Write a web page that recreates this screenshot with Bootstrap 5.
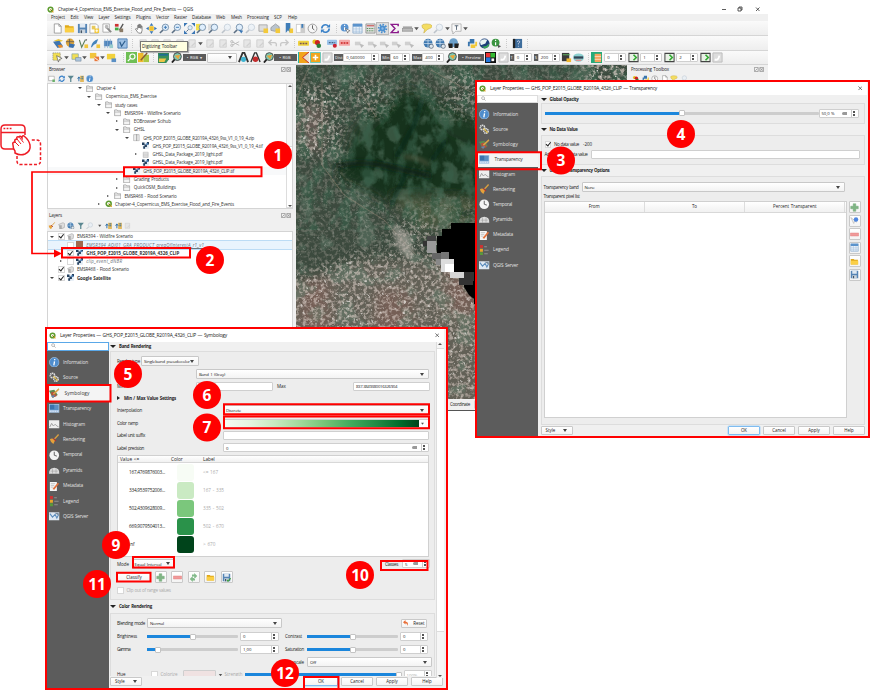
<!DOCTYPE html>
<html lang="en">
<head>
<meta charset="utf-8">
<title>QGIS layer properties walkthrough</title>
<link rel="stylesheet" href="https://cdn.jsdelivr.net/npm/bootstrap@5.3.0/dist/css/bootstrap.min.css">
<style>
*{letter-spacing:inherit}
body{margin:0;width:871px;height:693px;overflow:hidden;position:relative;background:#fff;font:4.5px/1 "Open Sans","Noto Sans",sans-serif;color:#222;word-spacing:.5px}
svg{display:block;flex:none}
span{white-space:nowrap;flex:none}
.win{position:absolute;overflow:hidden;background:#f0f0f0}
.main-win{left:47px;top:14px;width:721px;height:397px;border-bottom:1px solid #555}
.app-title{position:absolute;left:47px;top:4px;width:721px;height:10px;padding:0 7px 0 0}
.menus{height:7px}
.tools{height:15px;background:linear-gradient(#fafafa,#eee);border-bottom:1px solid #d5d5d5}
.tools svg{width:11px;height:11px}
.r3{height:14px}
.sp{flex:none;height:1px}
.tsep{width:1px;height:9px;border-left:1px dotted #ccc;flex:none}
.dk{background:#5b5b5b;color:#ddd;height:7px;font-size:4px;font-weight:600;justify-content:center}
.inp{background:#fff;border:1px solid #cfcfcf;border-radius:1px;height:9px;padding:0 2px;display:flex;align-items:center;flex:none;font-size:4.3px}
.sel{background:linear-gradient(#fff,#f3f3f3);justify-content:space-between;height:10px;border-color:#c8c8c8}
.sel::after{content:"";border:2px solid transparent;border-top:3px solid #444;border-bottom:0;margin-right:2px}
.spin{justify-content:space-between}
.spin i{margin-left:auto;height:7px;width:5px;border-left:1px solid #ccc;background:conic-gradient(from 150deg at 50% 10%,#555 60deg,#0000 0) 50% 0/4px 3px no-repeat,conic-gradient(from -30deg at 50% 90%,#555 60deg,#0000 0) 50% 100%/4px 3px no-repeat}
.spin .clr::after{content:"";display:block;width:5px;height:3px;background:#999;border-radius:2px 0 0 2px}
.clr{margin-left:auto;padding-right:4px}.clr+i{margin-left:0!important}
.left-col{width:247px;flex:none;padding-right:1px}
.ptitle{height:8.6px;padding:0 2px}
.ptools{height:9.600px;gap:2px;padding-left:1px}
.ptools svg{width:7.5px;height:7.5px}
.lyr-panel{padding-top:2.200px}.lyr-panel .ptools{height:11.500px}
.tree{background:#fff;border:1px solid #d4d4d4;position:relative;overflow:hidden}
.trow{height:8.27px;display:flex;align-items:center;color:#333}
.trow svg{width:7.4px;height:7.4px;margin-right:3px}
.trow .ex{width:4px;flex:none;margin-right:4px;display:flex;justify-content:center}
.ex.d::after{content:"";border:2px solid transparent;border-top:2.5px solid #444;border-bottom:0}
.ex.r::after{content:"";border:1.6px solid transparent;border-left:2.2px solid #444;border-right:0}
.chk{width:6.5px;height:6.5px;border:1px solid #d8d8d8;background:#fff;flex:none;margin-right:3px;position:relative}
.chk.on::after{content:"";position:absolute;left:1px;top:-1px;width:2.6px;height:4.6px;border:solid #222;border-width:0 1px 1px 0;transform:rotate(38deg)}
#layers .chk{margin-right:2px}
.vbar{position:absolute;right:0;top:0;bottom:0;width:6.5px;background:#f6f6f6;border-left:1px solid #ddd}
.vbar b{display:block;position:absolute;left:0;right:0;background:#fff;border:solid #ddd;border-width:1px 0}
.vbar::before,.vbar::after{content:"";position:absolute;left:1px;border:2px solid transparent}
.vbar::before{top:1px;border-bottom:2.5px solid #555;border-top:0}.vbar::after{bottom:1px;border-top:2.5px solid #555;border-bottom:0}
.tip{position:absolute;left:140px;top:41px;width:48px;height:10.500px;background:#ffffe1;border:1px solid #777;padding-left:1px;box-shadow:1px 1px 1px #0004}
.proc{position:absolute;left:580px;top:51px;width:141px;height:40px;background:#f0f0f0;padding:0 4px}
.dlg{border:2.5px solid #f00;display:flex;flex-direction:column}
.d-trans{left:475px;top:80px;width:395px;height:358px;padding-right:1px}
.d-sym{left:45px;top:327px;width:403px;height:363px;padding-right:2px}
.dtitle{background:#fff;padding:0 5px 0 2px;font-size:4.900px;flex:none}
.side{background:#5c5c5c;color:#e2e2e2;flex:none;font-size:4.800px}
.side .find{background:#fff;height:7.5px;padding-left:3px;border:1px solid #ddd}
.side .find.foc{height:9px;border-color:#5aa8e8}
.side .it{padding-left:2px;flex:none}
.side .it svg{width:10.500px;height:10.500px;margin-right:3.500px}
.side .act{background:#f4f4f4;color:#333}.side .act span{margin-left:1.500px}
.d-trans .side{width:60.5px}.d-trans .it{height:15.1px}.d-trans .find{margin-bottom:4px}
.d-sym .side{width:62px}.d-sym .it{height:15.47px}.d-sym .find{margin-bottom:3.300px}
.hd{font-weight:700;font-size:4.4px;display:flex;align-items:center;flex:none;color:#222}
.hd::before{content:"";border:3px solid transparent;border-top:3.5px solid #222;border-bottom:0;margin:0 3px 0 0}
.hd.shut::before{border:2.5px solid transparent;border-left:3px solid #222;border-right:0;margin-right:4px}
.box{border:1px solid #ddd;background:#ededed;flex:none}
.ln{display:flex;align-items:center;flex:none}
.track{height:3px;background:#cdcdcd;border-radius:1px;flex:none}
.track div{height:3px;background:#1b86dc;display:flex;align-items:center;justify-content:flex-end}
.track div::after{content:"";width:6px;height:6px;background:#fff;border:1px solid #c4c4c4;border-radius:1px;flex:none;margin-right:-3px}
.track .w-100::after{margin-right:0}
.pb{border:1px solid #c9c9c9;border-radius:1px;background:linear-gradient(#fff,#f4f4f4);display:flex;align-items:center;justify-content:center;flex:none;height:9px;font-size:4.4px}
.pb.def{border-color:#7fbcf0;box-shadow:0 0 0 .5px #a9d3f5}
.sq{width:12px;height:12px}.sq svg{width:9px;height:9px}
.stl{width:32px;justify-content:space-around}.stl::after{content:"";border:2px solid transparent;border-top:3px solid #444;border-bottom:0}
.tb{background:#fff;border:1px solid #d0d0d0;flex:none}
.th3{height:10.5px;border-bottom:1px solid #d8d8d8;background:linear-gradient(#fff,#f1f1f1);font-size:4.5px}
.th3>div{flex:1;border-right:1px solid #ddd;text-align:center;line-height:9.5px}
.sw{width:17px;height:17px;border-radius:3px;flex:none}
.ramp{height:7px;width:197px;margin-left:-2px;background:linear-gradient(90deg,#f7fcf5,#e5f5e0 13%,#c7e9c0 26%,#a1d99b 39%,#74c476 52%,#41ab5d 65%,#238b45 78%,#006d2c 90%,#00441b)}
.w40{width:40px}.w27{width:28px}.w76{width:77px}.w90{width:91px}.w206{width:206px}.w233{width:233px}.w58{width:58px}.w43{width:43px}.w135{width:135px}.w125{width:125px}.w34{width:34px}.w268{width:269px}.w263{width:263px}.w273{width:274px}.w26{width:26px}.w157{width:157px}
.l30{width:30px}.l22{width:22px}.l79{width:79px}.l106{width:106px}
.gray{color:#aaa}
.lay{position:absolute;left:0;top:0}
.clr-btn{width:33px;background:#f0e2e2}
#browser{height:126px}#layers{height:97px}#coordBar{left:446px;top:399px;width:40px;height:11px}
.map-view{margin-left:2px}.tools .selected{background:#ddd;outline:.5px solid #bbb}
.hl{background:#e9f4fd;outline:.5px solid #bcdcf5}
.l46{width:46px;flex:none}.l38{width:38px;flex:none}.w32{width:32px}
.t-body{padding:0 2px 0 3px}.t-h1{height:8px}.t-b1{height:21px;padding-left:3px;padding-bottom:1px}.t-h2{height:11px}
.t-b2{height:30px;padding:3px 3px 0 3px}.t-l1{height:11px}.t-b3{height:249px;padding:5px 0 0 2px}.t-l2{height:9px}.t-tb{width:303px;height:217px}
.t-btns{display:flex;flex-direction:column;gap:1.5px;padding:0 0 0 2px}.t-foot{gap:3px;height:12px;padding-bottom:2px}
.s-body{padding-left:1px}.s-bar{right:0;bottom:10px;width:8px}.s-bar b{top:6px;height:284px}
.s-scroll{height:334px;overflow:hidden}.s-h{height:9px}.s-h2{height:13px}
.box.s-b1,.box.s-b2{width:325px;padding-top:2px}.s-b1{height:249px}.s-b2{height:90px}
.pl5{padding-left:6px}.r14{height:14px}.r13{height:13px}.r12{height:12.2px}.r10{height:11px}
.l25{width:24px}.l16{width:14.500px}.l81{width:80px}.l51{width:51px}.l33{width:32px}.l34{width:34px}.l19{width:20px}.pl5>div[class^=l]{flex:none}
.s-tb{margin:1px 0 0 6px;width:312px;height:102px}.th3.s-th{height:7.500px;padding-left:2px;font-size:4.700px}
.crow{height:18px;display:flex;align-items:center;font-size:4.700px}.crow .v{width:48px;padding-left:11px}.crow .sw{margin:0 9px 0 11px}
.gap4{gap:4px}.s-btns{display:flex;gap:4.500px;margin-left:-.5px}.rst{margin-left:119px}.ml7{margin-left:6px}.ml2{margin-left:2px}.w38{width:39px;margin-left:2px}.ml168{margin-left:168px}.p12{width:12%}
.s-foot{gap:3px;height:11px;padding-right:1px}
</style>
<script src="https://cdn.jsdelivr.net/npm/bootstrap@5.3.0/dist/js/bootstrap.bundle.min.js"></script>
</head>
<body>
<svg width="0" height="0" class="position-absolute">
<defs>
<symbol id="q" viewBox="0 0 12 12"><circle cx="6" cy="6" r="4" fill="none" stroke="#5d9c2f" stroke-width="2.6"/><path d="M6 6l5 5" stroke="#e8a020" stroke-width="2"/><path d="M6 6l3 3" stroke="#3c7c20" stroke-width="1.5"/></symbol>
<symbol id="new" viewBox="0 0 12 12"><path d="M2.5 1h5l2.500 2.500V11H2.500zM7.500 1v2.500H10" fill="#fff" stroke="#888" stroke-width=".8"/></symbol>
<symbol id="open" viewBox="0 0 12 12"><path d="M1 2.500h4l1 1h4.500V10H1z" fill="#e0a91a"/><path d="M1 5h10v5H1z" fill="#fbcf45"/></symbol>
<symbol id="save" viewBox="0 0 12 12"><path d="M1 1h10v10H1z" fill="#5584b5"/><path d="M3 1h6v4H3z" fill="#dfe8f2"/><path d="M3 7h6v4H3z" fill="#cbd4dd"/><path d="M4 8h1.500v3H4z" fill="#456"/></symbol>
<symbol id="savec" viewBox="0 0 12 12"><use href="#save"/><path d="M6.500 9l1.500 2 3.500-4" fill="none" stroke="#3a9a3a" stroke-width="1.500"/></symbol>
<symbol id="lay" viewBox="0 0 12 12"><path d="M1 1h7l2 2v8H1z" fill="#fff" stroke="#999" stroke-width=".8"/><path d="M3 3h4v4H3z" fill="#e7c95c"/><path d="M6 6h5v5H6z" fill="#f3c93b"/><path d="M8.500 7v3M7 8.500h3" stroke="#fff"/></symbol>
<symbol id="laym" viewBox="0 0 12 12"><path d="M1 1h7v9H1z" fill="#fff" stroke="#999" stroke-width=".8"/><path d="M4 4l6 6" stroke="#888" stroke-width="2"/><circle cx="5" cy="4" r="2" fill="#bbb"/></symbol>
<symbol id="sty" viewBox="0 0 12 12"><path d="M1 1h4v3H1z" fill="#c33"/><path d="M1 5h4v3H1z" fill="#4a4"/><path d="M6 8l4-7" stroke="#555" stroke-width="1.500"/><path d="M6 6h4v4H6z" fill="#8a7a66"/></symbol>
<symbol id="hand" viewBox="0 0 12 12"><path d="M4 10L1.500 6.500l1-.5L4 7V2.500h1.200V5.500 1.500h1.200V5.500 2h1.200V6 3.500h1.200V8L8 11H5z" fill="#fff" stroke="#555" stroke-width=".7"/></symbol>
<symbol id="pan" viewBox="0 0 12 12"><path d="M6 0l2 3H4zM6 12l2-3H4zM0 6l3-2v4zM12 6L9 4v4z" fill="#3b77b5"/><path d="M3.500 3.500h5v5h-5z" fill="#f2c230"/></symbol>
<symbol id="mag" viewBox="0 0 12 12"><path d="M4.500 7.500L1 11" stroke="#5b6f84" stroke-width="1.600"/><circle cx="7" cy="4.700" r="3.500" fill="#dfeefc" stroke="#6b87a3" stroke-width=".9"/></symbol>
<symbol id="zin" viewBox="0 0 12 12"><use href="#mag"/><path d="M7 3v3.500M5.300 4.700h3.500" stroke="#3b77b5"/></symbol>
<symbol id="zout" viewBox="0 0 12 12"><use href="#mag"/><path d="M5.300 4.700h3.500" stroke="#3b77b5"/></symbol>
<symbol id="full" viewBox="0 0 12 12"><path d="M0 0h4L0 4zM12 0v4L8 0zM0 12V8l4 4zM12 12H8l4-4z" fill="#3b77b5"/><use href="#mag" x="2" y="2" width="8" height="8"/></symbol>
<symbol id="zy" viewBox="0 0 12 12"><path d="M0 1h6v7H0z" fill="#f3e04d"/><use href="#mag"/></symbol>
<symbol id="zw" viewBox="0 0 12 12"><path d="M0 1h6v7H0z" fill="#ddd"/><use href="#mag"/></symbol>
<symbol id="zg" viewBox="0 0 12 12"><g opacity=".35"><use href="#mag"/></g></symbol>
<symbol id="zA" viewBox="0 0 12 12"><use href="#mag"/><path d="M6 7l3 4.500 2-3z" fill="#3b77b5"/></symbol>
<symbol id="mapn" viewBox="0 0 12 12"><path d="M1 2h9v7H1z" fill="#ddd" stroke="#999" stroke-width=".8"/><path d="M6 6h5v5H6z" fill="#f3c93b"/></symbol>
<symbol id="addl" viewBox="0 0 12 12"><path d="M1 2h9v7H1z" fill="#fff" stroke="#888" stroke-width=".8"/><path d="M7 7h4v4H7z" fill="#6ab06a"/></symbol>
<symbol id="cube" viewBox="0 0 12 12"><path d="M1 5l5-4 4 3v4L5 9 1 8z" fill="#b9c4ce" stroke="#888" stroke-width=".7"/><path d="M6 6h5v5H6z" fill="#f3c93b"/></symbol>
<symbol id="bm" viewBox="0 0 12 12"><path d="M3 0h5v11L5.500 8 3 11z" fill="#3f7db8"/><path d="M7 6h4v5H7z" fill="#f3c93b"/></symbol>
<symbol id="bm2" viewBox="0 0 12 12"><path d="M1 1h10v10H1z" fill="#ccc"/><path d="M2 2h4v8H2z" fill="#fff"/><path d="M7 1h2v5L8 5 7 6z" fill="#3f7db8"/></symbol>
<symbol id="clk" viewBox="0 0 12 12"><circle cx="6" cy="6" r="4.800" fill="#f7f7f7" stroke="#999" stroke-width="1"/><path d="M6 2.500V6l2 1.500" fill="none" stroke="#444" stroke-width=".9"/></symbol>
<symbol id="ref" viewBox="0 0 12 12"><path d="M2 6a4 4 0 0 1 7-2.700M10 6a4 4 0 0 1-7 2.700" fill="none" stroke="#3b82c8" stroke-width="1.800"/><path d="M11 1v4H7zM1 11V7h4z" fill="#3b82c8"/></symbol>
<symbol id="idn" viewBox="0 0 12 12"><circle cx="5" cy="5" r="4.300" fill="#5a93cf"/><path d="M5 4.500V8M5 2v1.300" stroke="#fff" stroke-width="1.300"/><path d="M6 6l5 2.500-2 .5-.5 2z" fill="#fff" stroke="#555" stroke-width=".6"/></symbol>
<symbol id="tab" viewBox="0 0 12 12"><path d="M1 1h10v10H1z" fill="#eaf2fa" stroke="#7fa3c7" stroke-width=".8"/><path d="M1 1h10v3H1z" fill="#5b93cc"/><path d="M1 6.500h10M1 9h10M4.500 4v7M8 4v7" stroke="#9cbad8" stroke-width=".6"/></symbol>
<symbol id="cal" viewBox="0 0 12 12"><path d="M1 1h10v10H1z" fill="#ddd" stroke="#777" stroke-width=".7"/><path d="M2 3h8" stroke="#c55" stroke-width="1.200"/><path d="M2 6h8M2 8.500h8" stroke="#4a8a4a" stroke-dasharray="1.500 1"/></symbol>
<symbol id="gear" viewBox="0 0 12 12"><circle cx="6" cy="6" r="4.200" fill="none" stroke="#4a8fd0" stroke-width="2" stroke-dasharray="1.700 1.500"/><circle cx="6" cy="6" r="2.300" fill="#8dbbe6" stroke="#4a8fd0" stroke-width="2"/></symbol>
<symbol id="sig" viewBox="0 0 12 12"><path d="M10 3.500V1.500H2.500L6.500 6l-4 4.500H10v-2" fill="none" stroke="#8b1a8b" stroke-width="1.600"/></symbol>
<symbol id="rul" viewBox="0 0 12 12"><path d="M0 6h12v3H0z" fill="#bbb" stroke="#777" stroke-width=".6"/><path d="M1 4.500h10" stroke="#444" stroke-width=".8"/></symbol>
<symbol id="bub" viewBox="0 0 12 12"><path d="M1 3q0-2 5-2t6 2-5 4l-4 4 1-4Q1 6 1 3z" fill="#f4dd62" stroke="#c5a93a" stroke-width=".6"/></symbol>
<symbol id="txt" viewBox="0 0 12 12"><path d="M1 1h10v8H5l-3 3V9H1z" fill="#fafafa" stroke="#999" stroke-width=".7"/><path d="M4 3h4M6 3v4.500" stroke="#456" stroke-width=".9"/></symbol>
<symbol id="ds" viewBox="0 0 12 12"><path d="M1 3l5-2 5 2-5 2z" fill="#e9c63f"/><path d="M0 4l7-1 4 6-6 2z" fill="#3f75b0"/><path d="M5 8l4-1 2 3-4 1z" fill="#e58a2a"/></symbol>
<symbol id="glb" viewBox="0 0 12 12"><circle cx="5.500" cy="5" r="4.500" fill="#d9a33e"/><path d="M1 4h9M5 1v8" stroke="#555" stroke-width=".8"/><path d="M5 6l6 1-2 4-5-1z" fill="#3a70ad"/></symbol>
<symbol id="V" viewBox="0 0 12 12"><path d="M1.500 2l2.500 8L8 2" fill="none" stroke="#5c7f5c" stroke-width="1.200"/><circle cx="9" cy="2" r="1" fill="#777"/><path d="M7 7h4v4H7z" fill="#f0c63c"/></symbol>
<symbol id="fea" viewBox="0 0 12 12"><path d="M1 10Q2 3 9 1L7 6Q4 7 2 10z" fill="#4584bb"/><path d="M7 7h4v4H7z" fill="#f0c63c"/></symbol>
<symbol id="chip" viewBox="0 0 12 12"><path d="M1 3h9v6H1z" fill="#4d83bb"/><path d="M2 1v10M5 1v10M8 1v10" stroke="#8badd0" stroke-width=".8"/><path d="M7 7h4v4H7z" fill="#9cc"/></symbol>
<symbol id="Vb" viewBox="0 0 12 12"><path d="M1 1h10v10H1z" fill="#9fc1e4" stroke="#4b7fb6"/><path d="M3 4l2 5 4-6" fill="none" stroke="#2e5f8f" stroke-width="1.400"/></symbol>
<symbol id="g1" viewBox="0 0 12 12"><path d="M2 2h7v8H2z" fill="#e6e6e6" stroke="#d0d0d0"/><path d="M5 9l4-4" stroke="#d0d0d0" stroke-width="1.300"/></symbol>
<symbol id="g2" viewBox="0 0 12 12"><path d="M1 4h6v4H1z" fill="#d0d0d0"/><path d="M6 6l5 2-3 3z" fill="#bbb"/></symbol>
<symbol id="cut" viewBox="0 0 12 12"><path d="M2 4l8 4M2 8l8-4" stroke="#bbb"/><circle cx="2" cy="4" r="1.300" fill="none" stroke="#bbb"/><circle cx="2" cy="8" r="1.300" fill="none" stroke="#bbb"/></symbol>
<symbol id="und" viewBox="0 0 12 12"><path d="M3 5h5q3 0 2 4M5 2L2 5l3 3" fill="none" stroke="#c8c8c8" stroke-width="1.500"/></symbol>
<symbol id="red" viewBox="0 0 12 12"><path d="M9 5H4Q1 5 2 9M7 2l3 3-3 3" fill="none" stroke="#c8c8c8" stroke-width="1.500"/></symbol>
<symbol id="ab" viewBox="0 0 12 12"><rect y="3" width="12" height="5.500" rx="1" fill="#efd23d"/><path d="M2 6h8" stroke="#755" stroke-width="1.500" stroke-dasharray="2 1"/></symbol>
<symbol id="ab2" viewBox="0 0 12 12"><rect y="2" width="11" height="5.500" rx="1" fill="#9cc3ea"/><path d="M2 5h7" stroke="#468" stroke-width="1.500" stroke-dasharray="2 1"/><circle cx="8.500" cy="8.500" r="2.200" fill="#c23"/></symbol>
<symbol id="ab3" viewBox="0 0 12 12"><rect y="2" width="12" height="6.500" rx="1" fill="#f3a7a7"/><path d="M2 5.500h8" stroke="#c22" stroke-width="1.800" stroke-dasharray="2 1"/></symbol>
<symbol id="pie" viewBox="0 0 12 12"><circle cx="4" cy="4" r="2.500" fill="#e4c21f"/><circle cx="7" cy="5" r="2.800" fill="#c22"/><circle cx="8.500" cy="8.500" r="2.500" fill="#2a7d3a"/></symbol>
<symbol id="gb" viewBox="0 0 12 12"><circle cx="5.500" cy="5.500" r="4.800" fill="#3d78b0"/><path d="M2 3h7M1 6h9M5.500 1v9" stroke="#cfe0ee" stroke-width=".8"/><circle cx="9" cy="9" r="2.300" fill="#dfe7ee" stroke="#567" stroke-width=".8"/></symbol>
<symbol id="gb2" viewBox="0 0 12 12"><circle cx="6" cy="5" r="4.800" fill="#6ba0cb"/><path d="M0 6h5v5H1zM7 6h5l-1 5H7z" fill="#222"/></symbol>
<symbol id="py" viewBox="0 0 12 12"><path d="M3 1h5v5H3v3H1V4h2z" fill="#3a75ad"/><path d="M9 11H4V7h5V4h2v5H9z" fill="#f3c93b"/></symbol>
<symbol id="wrl" viewBox="0 0 12 12"><circle cx="6" cy="6" r="5.500" fill="#1d3f7a"/><path d="M1 4q3-4 8-2l-2 4-5 2z" fill="#eaf4f4"/><path d="M3 9q5 1 8-3 0 5-5 5.500z" fill="#3aa65a"/></symbol>
<symbol id="gi" viewBox="0 0 12 12"><circle cx="5" cy="5" r="4.300" fill="#3a9440"/><path d="M5 4.500V8M5 2v1.300" stroke="#fff" stroke-width="1.300"/><path d="M7 7l4 2-3 2z" fill="#555"/></symbol>
<symbol id="hlp" viewBox="0 0 12 12"><path d="M1 1h10v10H1z" fill="#3e6d9c"/><path d="M1 1h2.500v10H1z" fill="#222"/><path d="M5.500 4q2-2 3 0 0 1-1.500 2v1M7 8.500v1" fill="none" stroke="#dde" stroke-width=".9"/></symbol>
<symbol id="sl" viewBox="0 0 12 12"><path d="M1 1h8v8H1z" fill="#f2df53" stroke="#888" stroke-width=".7" stroke-dasharray="1.500 .7"/><path d="M5 4l6 3-3 1-1 3z" fill="#fff" stroke="#555" stroke-width=".7"/></symbol>
<symbol id="sl2" viewBox="0 0 12 12"><path d="M1 2h7v6H1z" fill="#f2df53" stroke="#8aa" stroke-width=".8"/><path d="M5 6h6v4H5z" fill="#aac4dd" stroke="#789" stroke-width=".6"/></symbol>
<symbol id="sl3" viewBox="0 0 12 12"><path d="M1 1h7v6H1z" fill="#f2c53d"/><path d="M6 5h5v5H6z" fill="#e7773a"/><path d="M6 6l5 4" stroke="#fff"/></symbol>
<symbol id="sl4" viewBox="0 0 12 12"><path d="M1 2h9v6H1z" fill="#f2d23d"/><path d="M6 7h5v4H6z" fill="#5a8fc4"/></symbol>
<symbol id="gs" viewBox="0 0 12 12"><path d="M0 0h12v12H0z" fill="#6fbf55"/><circle cx="7" cy="5" r="2.800" fill="none" stroke="#fff" stroke-width="1.300"/><path d="M5 7l-3 3" stroke="#fff" stroke-width="1.400"/></symbol>
<symbol id="puz" viewBox="0 0 12 12"><path d="M0 1h6v10H0z" fill="#f0b92b"/><path d="M6 3h6v8H6z" fill="#a8c845"/><path d="M3 9l7-8" stroke="#8a5a33" stroke-width="1.600"/></symbol>
<symbol id="scp" viewBox="0 0 12 12"><path d="M0 1h12v7l-3 4H0z" fill="#3a8e5a"/><path d="M1 7h8l-2 4H1z" fill="#ecc547"/><path d="M1 2h10v2H1z" fill="#1f6f93"/></symbol>
<symbol id="mc" viewBox="0 0 12 12"><circle cx="7" cy="5" r="4.300" fill="#7fc8b0" stroke="#444"/><path d="M4 4l4 4 2-5z" fill="#e9a63a"/><path d="M4 8l-3 3.500" stroke="#222" stroke-width="2"/></symbol>
<symbol id="bA" viewBox="0 0 12 12"><path d="M1 11L5 1h2l4 10" fill="none" stroke="#333" stroke-width="2"/><circle cx="6" cy="8" r="2.800" fill="#3fb3d0"/></symbol>
<symbol id="rA" viewBox="0 0 12 12"><path d="M1 11L5 1h2l4 10" fill="none" stroke="#333" stroke-width="1.500"/><circle cx="6" cy="8" r="3" fill="#c22c2c"/></symbol>
<symbol id="or" viewBox="0 0 12 12"><path d="M0 0h12v12H0z" fill="#f1a51c"/><path d="M12 0L5 6l7 6" fill="#e8e0d0" stroke="#c22"/><path d="M0 0v12" stroke="#1bb" stroke-width="2"/></symbol>
<symbol id="orp" viewBox="0 0 12 12"><path d="M.5.500h11v11H.5z" fill="#f1a51c" stroke="#5bc5c0"/><path d="M6 3v6M3 6h6" stroke="#fff" stroke-width="1.700"/></symbol>
<symbol id="gp" viewBox="0 0 12 12"><path d="M1 1h10v10H1z" fill="#ddd" stroke="#bbb"/><path d="M3 8q4 2 5-4" fill="none" stroke="#fff" stroke-width="2"/></symbol>
<symbol id="rgb" viewBox="0 0 12 12"><path d="M0 0h12v12H0z" fill="#111"/><path d="M1 1h5v5H1z" fill="#e33"/><path d="M6 1h5v5H6z" fill="#3b3"/><path d="M1 6h5v5H1z" fill="#27d"/><path d="M7 7h3v3H7z" fill="#fff"/></symbol>
<symbol id="cyl" viewBox="0 0 12 12"><path d="M1 1h8v9H1z" fill="#3b3b3b"/><path d="M2 3h8" stroke="#6b6"/><path d="M6 7h5v4H6z" fill="#f0b930"/></symbol>
<symbol id="cc" viewBox="0 0 12 12"><ellipse cx="6" cy="6" rx="6" ry="4.500" fill="#8cd0d0"/><path d="M1 6h10" stroke="#345" stroke-width="2.500"/><path d="M3 9h6" stroke="#e88" stroke-width="1.300"/></symbol>
<symbol id="tr" viewBox="0 0 12 12"><path d="M0 0h12v12H0z" fill="#26aa7a"/><path d="M4 2h7v9H4z" fill="#f4a35d"/><path d="M4 5h7M4 8h7" stroke="#fff" stroke-width=".6"/></symbol>
<symbol id="run" viewBox="0 0 12 12"><path d="M1 1.500h10v9H1z" fill="#e9f2e6" stroke="#444" stroke-width="1.100"/><path d="M6 3l3 3-3 3" fill="none" stroke="#3a3" stroke-width="1.800"/></symbol>
<symbol id="fol" viewBox="0 0 12 12"><path d="M1 1.500h4l1 1.500h5v8H1z" fill="#f4f4f4" stroke="#888" stroke-width="1"/><path d="M1 5h10" stroke="#999" stroke-width=".9"/></symbol>
<symbol id="zip" viewBox="0 0 12 12"><path d="M1 1h9v10H1z" fill="#eee" stroke="#999" stroke-width=".8"/><path d="M6 1v10" stroke="#555" stroke-width="1.500" stroke-dasharray="1 .7"/></symbol>
<symbol id="ras" viewBox="0 0 12 12"><path d="M1 1h10v10H1z" fill="#e2ebf4"/><path d="M0 1h4v4H0zM4 4h4v4H4zM8 0h4v4H8zM2 7h3v4H2z" fill="#25415f"/><path d="M7 2h3v3H7z" fill="#4d83bb"/></symbol>
<symbol id="db" viewBox="0 0 12 12"><path d="M2 2h8v8.500H2z" fill="#eee" stroke="#aaa" stroke-width=".8"/><path d="M2 5h8M2 8h8" stroke="#aaa"/></symbol>
<symbol id="grp" viewBox="0 0 12 12"><path d="M1 4l7-3 3 2-1 6-5 2z" fill="#ddd" stroke="#999" stroke-width=".8"/><path d="M2 5h4v6H2z" fill="#aaa"/></symbol>
<symbol id="brn" viewBox="0 0 12 12"><path d="M0 0h12v12H0z" fill="#a0684e"/></symbol>
<symbol id="fil" viewBox="0 0 12 12"><path d="M1 1h10L7 6v5H5V6z" fill="#5b8791"/></symbol>
<symbol id="col" viewBox="0 0 12 12"><path d="M5 1h6v10H5z" fill="#e3b95c"/><path d="M3 4v6M1 6l2-3 2 3M7 3h3M7 6h3" fill="none" stroke="#2d6da5" stroke-width="1.500"/></symbol>
<symbol id="inf" viewBox="0 0 12 12"><circle cx="6" cy="6" r="5.500" fill="#4f8dcc" stroke="#b6d0ea" stroke-width=".7"/><path d="M6.300 5L5.500 9.500M6.600 2.300l-.2 1.400" stroke="#fff" stroke-width="1.500"/></symbol>
<symbol id="src" viewBox="0 0 12 12"><circle cx="4" cy="4" r="2.500" fill="none" stroke="#ddd" stroke-width="1.800" stroke-dasharray="1.500 .5"/><circle cx="8" cy="8" r="2.500" fill="none" stroke="#ddd" stroke-width="1.800" stroke-dasharray="1.500 .5"/><path d="M5 5l5 5" stroke="#e5c04a" stroke-width="1.300"/></symbol>
<symbol id="sym" viewBox="0 0 12 12"><path d="M0 3l6-1 4 6-6 3z" fill="#5a8c50"/><path d="M2 5l4-1 3 5-5 2z" fill="#b5523c"/><path d="M5 7l6.500-6" stroke="#d9a548" stroke-width="1.700"/><path d="M2 9l3 2 2-3z" fill="#5b8bb7"/></symbol>
<symbol id="trn" viewBox="0 0 12 12"><path d="M0 1h12v10H0z" fill="#a9c7e5"/><path d="M1 2h10v6H1z" fill="#5a8fc4"/><path d="M1 2h5v5H1z" fill="#3a73ae"/><path d="M1 9.500h10" stroke="#eef" stroke-dasharray="1 1"/></symbol>
<symbol id="his" viewBox="0 0 12 12"><path d="M0 1.500h12v9H0z" fill="#eee"/><path d="M1 9L3 5l2 3 2-2 2 2 2 1" fill="none" stroke="#999"/></symbol>
<symbol id="ren" viewBox="0 0 12 12"><path d="M6 6l5-5.500" stroke="#d9a040" stroke-width="1.500"/><path d="M1 6q3-2 6 1l-2 4.500Q2 10 1 6z" fill="#e6a13a"/><path d="M5 5l3 3" stroke="#a33" stroke-width="1.300"/></symbol>
<symbol id="tmp" viewBox="0 0 12 12"><circle cx="6" cy="6" r="5.500" fill="#f4f4f4"/><path d="M6 2v4l3 1" fill="none" stroke="#555"/></symbol>
<symbol id="pyr" viewBox="0 0 12 12"><path d="M0 10q0-7 6-7t6 7z" fill="#ddd"/><path d="M2 7h8M4 4v6M8 4v6" stroke="#999" stroke-width=".6"/></symbol>
<symbol id="met" viewBox="0 0 12 12"><path d="M1 1h8v10.500H1z" fill="#f5f5f5"/><path d="M2 3h5M2 5h4M2 7h3" stroke="#aaa" stroke-width=".7"/><path d="M4 9l6-7 1.500 1L6 10z" fill="#e0703a"/></symbol>
<symbol id="leg" viewBox="0 0 12 12"><path d="M1 0h3.500v3.500H1z" fill="#c33"/><path d="M1 4.200h3.500v3.500H1z" fill="#e8a52a"/><path d="M1 8.400h3.500v3.500H1z" fill="#5a9a3a"/><path d="M6 2h3M6 6h5M6 10h4" stroke="#999"/></symbol>
<symbol id="srv" viewBox="0 0 12 12"><path d="M0 1.500h12v9H0z" fill="#dfe9f3"/><path d="M1 3l3 4 3-3 2 4 2-4" fill="none" stroke="#5b8cbc" stroke-width="1.200"/><path d="M6 2h5v3z" fill="#789"/></symbol>
<symbol id="pls" viewBox="0 0 12 12"><path d="M4.300 1h3.400v3.300H11v3.400H7.700V11H4.300V7.700H1V4.300h3.300z" fill="#7fb584" stroke="#6ba572" stroke-width=".6"/></symbol>
<symbol id="mns" viewBox="0 0 12 12"><path d="M.5 4h11v4H.5z" fill="#f09a9a" stroke="#e57f7f" stroke-width=".6"/></symbol>
<symbol id="pik" viewBox="0 0 12 12"><path d="M1 2l4 8 1-3 3 1z" fill="#eee" stroke="#aaa" stroke-width=".7"/><circle cx="8" cy="4.500" r="3" fill="#4d86e0"/></symbol>
<symbol id="swp" viewBox="0 0 12 12"><path d="M1 8l4-4v2.500h3V10H5v2zM11 4L7 0v2H4v2.500h3V8z" fill="#82ba8a"/></symbol>
<symbol id="rst" viewBox="0 0 12 12"><path d="M5 0L0 4.500 5 9V6.500q4-.5 3 5.500Q13 4 5 2.800z" fill="#e8703a"/></symbol>
<symbol id="lens" viewBox="0 0 12 12"><circle cx="5" cy="5" r="3.500" fill="none" stroke="#888" stroke-width="1.300"/><path d="M7.500 7.500L11 11" stroke="#888" stroke-width="1.500"/></symbol>
<symbol id="x" viewBox="0 0 12 12"><path d="M1 1l10 10M11 1L1 11" stroke="#333" stroke-width="1.700"/></symbol>
<symbol id="dock" viewBox="0 0 24 12"><path d="M1 1h9v10H1zM14 1h9v10h-9zM3 9l5-5M16 3l5 6M21 3l-5 6" fill="none" stroke="#888" stroke-width="1.700"/></symbol>
<symbol id="car" viewBox="0 0 12 12"><path d="M3.500 4.500h5L6 8z" fill="#555"/></symbol>
<!-- satellite texture -->
<filter id="speck" x="0" y="0" width="100%" height="100%"><feTurbulence type="fractalNoise" baseFrequency=".28" numOctaves="4" seed="8"/><feColorMatrix values="0 0 0 0 .64  0 0 0 0 .55  0 0 0 0 .50  4 0 0 0 -1.800"/></filter>
<filter id="white" x="0" y="0" width="100%" height="100%"><feTurbulence type="fractalNoise" baseFrequency=".28" numOctaves="3" seed="31"/><feColorMatrix values="0 0 0 0 .80  0 0 0 0 .77  0 0 0 0 .74  6 0 0 0 -3.900"/></filter>
<filter id="clump" x="0" y="0" width="100%" height="100%"><feTurbulence type="fractalNoise" baseFrequency=".05" numOctaves="4" seed="17"/><feColorMatrix values="0 0 0 0 .14  0 0 0 0 .25  0 0 0 0 .18  0 0 7 0 -3.700"/></filter>
<filter id="shade" x="0" y="0" width="100%" height="100%"><feTurbulence type="fractalNoise" baseFrequency=".09 .05" numOctaves="5" seed="4"/><feColorMatrix values="0 0 0 0 .04  0 0 0 0 .12  0 0 0 0 .07  0 4 0 0 -1.800"/></filter>
<filter id="bl" x="-20%" y="-20%" width="140%" height="140%"><feGaussianBlur stdDeviation="6"/></filter>
<filter id="bs" x="-20%" y="-20%" width="140%" height="140%"><feGaussianBlur stdDeviation="2"/></filter>
<mask id="town"><rect width="474" height="345" fill="#555"/><g filter="url(#bl)"><path d="M42 100L48 60 80 52 118 25 145 50 200 62v80l-40-12-50 10-40-12z" fill="#000"/><path d="M0 20h45v70H0z" fill="#ddd"/><path d="M-20 215L60 190l140-10v190H-20z" fill="#ddd"/><path d="M50 12h38v35H62zM150 5h30v40h-30z" fill="#bbb"/><path d="M95 155h45v50H95z" fill="#bbb"/><path d="M290 -8h50v30h-50z" fill="#fff"/></g></mask>
</defs>
</svg>

<div class="app-title d-flex align-items-center">
  <svg width="7" height="7" class="me-1"><use href="#q"/></svg><span data-w="135">Chapter-4_Copernicus_EMS_Exercise_Flood_and_Fire_Events — QGIS</span>
  <svg class="ms-auto" width="45" height="8" viewBox="0 0 45 8" fill="none" stroke="#333" stroke-width=".8"><path d="M6 4.500h4M22 3h3v3h-3zM23 3V2h3v3h-1M40 2.500l3.500 3.500M43.500 2.500L40 6"/></svg>
</div>

<div class="win main-win">
  <div class="menus d-flex align-items-center" id="menus"></div>
  <div class="tools d-flex align-items-center" data-tools="5 new . open . save . lay . laym . sty 6 | 2 hand . pan . zin . zout . full . zy . zw . zg . zA . zg . mapn . cube . bm . bm2 . clk . ref 5 | 3 idn . tab . cal . gear . sig . rul -2 car -1 bub . zg -2 car -2 txt -2 car"></div>
  <div class="tools d-flex align-items-center" data-tools="6 ds . glb . V . fea . chip 3 Vb 4 | 5 g1 . g1 . g1 . g1 . g1 -3 car -1 g1 . g1 . cut . g1 . g1 . und . red 4 | 3 ab . pie 5 ab2 . ab3 4 g2 . g2 . g2 . g2 . g2 8 gb . gb . gb2 8 py . wrl . gi 4 | 5 hlp 4 |"></div>
  <div class="tools r3 d-flex align-items-center" data-tools="5 sl -2 car -1 sl2 -3 car -1 sl3 -3 car -2 sl4 6 | 2 gs . puz 4 | 4 scp . mc 1 dk:23:▪_RGB_▾ 1 in:30:s 1 bA . rA . mc 0 dk:23:▪_RGB 1 or . orp . gp 1 dk:9:Dist 0 in:36:0,040000 2 dk:9:Min 0 in:20:60 2 dk:10:Max 0 in:22:400 2 mc 1 dk:26:▪_Preview 1 rgb . gp 1 dk:4:T 0 in:18:0 2 dk:4:S 0 in:22:200 1 cyl . cc 4 | 2 tr 2 in:22:0 2 run 1 in:22:1 2 run 1 in:22:2 2 run 1 gp"></div>
  <div class="d-flex">
    <div class="left-col">
      <div class="ptitle d-flex align-items-center justify-content-between"><span data-w="16">Browser</span><svg width="10" height="5"><use href="#dock"/></svg></div>
      <div class="ptools d-flex align-items-center" data-ic="addl ref fil col inf"></div>
      <div class="tree" id="browser"><div class="vbar"><b class="top-50 h-50"></b></div></div>
      <div class="lyr-panel">
      <div class="ptitle d-flex align-items-center justify-content-between"><span data-w="13">Layers</span><svg width="10" height="5"><use href="#dock"/></svg></div>
      <div class="ptools d-flex align-items-center" data-ic="ren grp gb fil zg car col col g1"></div>
      <div class="tree" id="layers"></div>
      </div>
    </div>
    <svg width="474" height="345" viewBox="0 0 474 345" class="map-view">
      <rect width="474" height="345" fill="#3c4a3e"/>
      <g filter="url(#bl)"><path d="M60 60L110 22l80 35v90l-60 10-90-45z" fill="#1c3824"/><path d="M40 102L118 25l35 45 40 20v40l-50 5-60 0z" fill="#15301d"/><path d="M0 40h28v45H0z" fill="#645a52"/><path d="M-20 225L70 195l130 0v170H-20z" fill="#626056"/><path d="M95 130l90 5v20l-60 10z" fill="#4c5840"/><path d="M5 215h28v60H5zM80 225h35v70H80zM150 200h30v50h-30z" fill="#755f56"/></g>
      <rect width="474" height="345" filter="url(#clump)" opacity=".4"/>
      <rect width="474" height="165" filter="url(#shade)" opacity=".6"/>
      <g filter="url(#bs)" fill="none" stroke="#0b2415" stroke-width="6" opacity=".8"><path d="M40 101q25-6 50 0t45 10"/><path d="M100 92l18-32M118 60l8-25M95 140l14-30M150 75l-14 20M165 150l25-8" stroke-width="3"/><path d="M108 92q15-1 25 8" stroke="#6b6750" stroke-width="2.500"/></g>
      <g mask="url(#town)"><rect width="474" height="345" filter="url(#speck)" opacity=".75"/><rect width="474" height="345" filter="url(#white)" opacity=".85"/></g>
      <path d="M26 10v90l22 30 40 25 32 35M0 40q5-25 15-40M60 20l20 32M135 5l45 25" fill="none" stroke="#9a8878" stroke-width=".8" opacity=".6"/>
      <path d="M97 158l16 12 5 22-6 2-12-13z" fill="#b8b2aa" opacity=".6" filter="url(#bs)"/>
      <path d="M184 158h-29v6h-9v7h-5v17l12 6 5 13 10 6v9l5 8 5 4v5h6z" fill="#000"/>
      <path d="M127 176h4v5h-4zM163 213h14v7h-14z" fill="#333"/><path d="M131 171h9v5h-9z" fill="#444"/><path d="M131 176h9v12h-9z" fill="#999"/><path d="M136 188h9v6h-9z" fill="#666"/><path d="M145 187h8v7h-8z" fill="#777"/><path d="M140 194h5v6h-5z" fill="#888"/><path d="M145 194h13v13h-13z" fill="#ddd"/><path d="M149 199h9v8h-9z" fill="#fff"/><path d="M154 207h14v6h-14z" fill="#d5d5d5"/><path d="M168 207h10v9h-10z" fill="#333"/>
    </svg>
  </div>
  <div class="proc"><div class="ptitle d-flex align-items-center justify-content-between px-0"><span data-w="38">Processing Toolbox</span><svg width="10" height="5"><use href="#dock"/></svg></div><div class="ptools d-flex align-items-center" data-ic="pie py clk new bub zg"></div></div>
</div>
<div class="tip d-flex align-items-center"><span data-w="35">Digitizing Toolbar</span></div>
<div class="win d-flex align-items-center ps-1" id="coordBar"><span data-w="20">Coordinate</span><div class="inp ms-1 w27"></div></div>

<div class="win dlg d-trans">
  <div class="dtitle d-flex align-items-center" style="height:13px"><svg width="7" height="7" class="me-1"><use href="#q"/></svg><span data-w="167">Layer Properties — GHS_POP_E2015_GLOBE_R2019A_4326_CLIP — Transparency</span><svg width="4.500" height="4.500" class="ms-auto"><use href="#x"/></svg></div>
  <div class="d-flex flex-grow-1">
    <div class="side" data-act="3"><div class="find"><svg width="5" height="5"><use href="#lens"/></svg></div></div>
    <div class="flex-grow-1 t-body">
      <div class="hd t-h1"><span data-w="29">Global Opacity</span></div>
      <div class="box ln t-b1"><div class="track w273"><div class="w-50"></div></div><div class="inp spin w40 ms-0"><span data-w="13">50,0 %</span><b class="clr"></b><i></i></div></div>
      <div class="hd t-h2"><span data-w="28">No Data Value</span></div>
      <div class="box t-b2"><div class="ln t-l1"><div class="chk on"></div><span data-w="25" class="me-1">No data value</span><span>-200</span></div><div class="ln"><div class="l46"><span data-w="43">Additional no data value</span></div><div class="inp w268"></div></div></div>
      <div class="hd t-h2"><span data-w="60">Custom Transparency Options</span></div>
      <div class="box t-b3">
        <div class="ln"><div class="l38"><span data-w="35">Transparency band</span></div><div class="inp sel w263"><span data-w="10">None</span></div></div>
        <div class="ln t-l2"><span data-w="36">Transparent pixel list</span></div>
        <div class="d-flex"><div class="tb t-tb"><div class="th3 d-flex"><div>From</div><div>To</div><div>Percent Transparent</div></div></div>
        <div class="t-btns" data-btn="pls pik mns tab open save"></div></div>
      </div>
      <div class="ln t-foot"><div class="pb stl">Style</div><div class="pb def w32 ms-auto">OK</div><div class="pb w32">Cancel</div><div class="pb w32">Apply</div><div class="pb w32">Help</div></div>
    </div>
  </div>
</div>

<div class="win dlg d-sym">
  <div class="dtitle d-flex align-items-center" style="height:13px"><svg width="7" height="7" class="me-1"><use href="#q"/></svg><span data-w="167">Layer Properties — GHS_POP_E2015_GLOBE_R2019A_4326_CLIP — Symbology</span><svg width="4.500" height="4.500" class="ms-auto"><use href="#x"/></svg></div>
  <div class="d-flex flex-grow-1">
    <div class="side" data-act="2"><div class="find foc"><svg width="5" height="5"><use href="#lens"/></svg></div></div>
    <div class="flex-grow-1 position-relative s-body">
      <div class="vbar s-bar"><b></b></div>
      <div class="s-scroll">
      <div class="hd s-h"><span data-w="32">Band Rendering</span></div>
      <div class="box s-b1">
        <div class="ln r14 pl5"><div class="l25"><span data-w="23">Render type</span></div><div class="inp sel w58"><span data-w="46">Singleband pseudocolor</span></div></div>
        <div class="ln r12 pl5"><div class="l79">Band</div><div class="inp sel w233"><span data-w="26">Band 1 (Gray)</span></div></div>
        <div class="ln r12 pl5"><div class="l79">Min</div><div class="inp w76"></div><div class="l81 ps-1">Max</div><div class="inp w76"><span data-w="41">837.3849380016326904</span></div></div>
        <div class="ln r10 pl5"><div class="hd shut"><span data-w="52">Min / Max Value Settings</span></div></div>
        <div class="ln r14 pl5"><div class="l106"><span data-w="25">Interpolation</span></div><div class="inp sel w206"><span data-w="15">Discrete</span></div></div>
        <div class="ln r12 pl5"><div class="l106"><span data-w="21">Color ramp</span></div><div class="inp w206"><div class="ramp"></div><svg width="7" height="7"><use href="#car"/></svg></div></div>
        <div class="ln r12 pl5"><div class="l106"><span data-w="28">Label unit suffix</span></div><div class="inp w206"></div></div>
        <div class="ln r12 pl5"><div class="l106"><span data-w="27">Label precision</span></div><div class="inp spin w206">0<b class="clr"></b><i></i></div></div>
        <div class="tb s-tb"><div class="th3 ln s-th"><span class="l51">Value &lt;=</span><span class="l33">Color</span><span>Label</span></div><div id="classes"></div></div>
        <div class="ln r14 pl5"><div class="l16"><span data-w="12">Mode</span></div><div class="inp sel w43"><span data-w="27">Equal Interval</span></div><span class="ms-auto me-1" data-w="13">Classes</span><div class="inp spin w27 me-1">5<b class="clr"></b><i></i></div></div>
        <div class="ln r13 pl5 gap4"><div class="pb w34">Classify</div><div class="s-btns" data-btn="pls mns swp open savec"></div></div>
        <div class="ln r13 pl5 gray"><div class="chk"></div><span data-w="44">Clip out of range values</span></div>
      </div>
      <div class="hd s-h2"><span data-w="33">Color Rendering</span></div>
      <div class="box s-b2">
        <div class="ln r14 pl5"><div class="l30"><span data-w="28">Blending mode</span></div><div class="inp sel w135"><span data-w="14">Normal</span></div><div class="pb w26 rst"><svg width="6" height="6" class="me-1"><use href="#rst"/></svg>Reset</div></div>
        <div class="ln r13 pl5"><div class="l30"><span data-w="20">Brightness</span></div><div class="track w90"><div class="w-50"></div></div><div class="inp spin w38">0<i></i></div><div class="l22 ml7"><span data-w="17">Contrast</span></div><div class="track w90"><div class="w-50"></div></div><div class="inp spin w27 ml2">0<i></i></div></div>
        <div class="ln r13 pl5"><div class="l30"><span data-w="13">Gamma</span></div><div class="track w90"><div class="p12"></div></div><div class="inp spin w38">1,00<i></i></div><div class="l22 ml7"><span data-w="19">Saturation</span></div><div class="track w90"><div class="w-50"></div></div><div class="inp spin w27 ml2">0<i></i></div></div>
        <div class="ln r12 pl5"><div class="ml168 l22"><span data-w="19">Grayscale</span></div><div class="inp sel w125">Off</div></div>
        <div class="ln r13 pl5"><div class="l34">Hue</div><div class="chk"></div><div class="l22 gray">Colorize</div><div class="inp clr-btn"></div><svg width="9" height="8"><use href="#car"/></svg><div class="l19 gray">Strength</div><div class="track w157"><div class="w-100"></div></div><div class="inp spin w27 ml2 gray">100%<i></i></div></div>
      </div>
      </div>
      <div class="ln s-foot"><div class="pb stl">Style</div><div class="pb def w34 ms-auto">OK</div><div class="pb w32">Cancel</div><div class="pb w32">Apply</div><div class="pb w32">Help</div></div>
    </div>
  </div>
</div>

<!-- step callouts -->
<svg class="lay" width="871" height="693" viewBox="0 0 871 693" fill="none" stroke="#f00" stroke-width="2">
  <path d="M124 167.300h137.500v9H124zM62 248h128v9.500H62zM477 152.200h64v17H477zM48 385h62.500v16.500H48zM224 404.300h205v10H224zM224 416.500h205v11.700H224zM133 557h41v10.500h-41zM381 561h46.500v9h-46.500zM117 572.700h33.500v8.800H117zM304 677h34.500v12H304z"/>
  <path d="M124 172H32v81.500h22" stroke-width="1.700"/><path d="M54 249.500l8 4-8 4z" fill="#f00" stroke="none"/>
  <g stroke="#ee1c25" stroke-width="1.500" transform="translate(0 60)"><path d="M14 89H5q-4 0-4-4V69q0-4 4-4h16q4 0 4 4v6M1 72.500h24"/><path d="M3.500 68.500h8" stroke-dasharray="1.800 1.300"/><path d="M17 96v5q0 3.500 3.500 3.500H37q3.500 0 3.500-3.500V84q0-4-4-4h-5" stroke-dasharray="3 1.800"/><path d="M15 93q5 3 10 1 6-3 5-9-1-5-6-9-2-1-2 2-2-3-3-1-3-1-2 2-3 0-2 3-3 0-2 3 0 4 2 6z" fill="#fff"/><path d="M17 79l4 5M19.500 77.500l4 5M15 82l4 4" stroke-width="1"/></g>
  <g id="nums" fill="#f00" stroke="none" font-family="Open Sans,Noto Sans,sans-serif" font-weight="700" font-size="15.500" text-anchor="middle"></g>
</svg>
<script>
const ic=n=>`<svg><use href="#${n}"/></svg>`;
const el=s=>document.querySelector(s);
el('#menus').innerHTML=[['Project',51,14],['Edit',70.5,8],['View',84,9],['Layer',98.5,11],['Settings',114.5,16],['Plugins',136,15],['Vector',156,13],['Raster',174,13],['Database',192,19],['Web',216,9],['Mesh',231,11],['Processing',247,22],['SCP',274,8],['Help',288,9]].reduce((a,[t,x,w])=>{a.h+=`<div class="sp" style="width:${x-a.x}px"></div><span data-w="${w}">${t}</span>`;a.x=x+w;return a},{h:'',x:47}).h;
document.querySelectorAll('[data-tools]').forEach(r=>{
  r.innerHTML=r.dataset.tools.split(' ').map(t=>{
    if(t==='.')return '<div class="sp" style="width:1.4px"></div>';
    if(t==='|')return '<div class="tsep"></div>';
    if(/^-?\d+$/.test(t))return +t<0?`<div class="sp" style="margin-left:${t}px"></div>`:`<div class="sp" style="width:${t}px"></div>`;
    const [k,w,s]=t.split(':');
    if(k==='dk')return `<div class="dk d-flex align-items-center flex-shrink-0 overflow-hidden" style="width:${w}px">${s.replace(/_/g,' ')}</div>`;
    if(k==='in')return s==='s'?`<div class="inp sel" style="width:${w}px"><b></b></div>`:`<div class="inp spin" style="width:${w}px">${s}<i></i></div>`;
    return t==='gear'?`<div class="selected">${ic(t)}</div>`:ic(t);
  }).join('');
});
document.querySelectorAll('[data-ic]').forEach(r=>r.innerHTML=r.dataset.ic.split(' ').map(ic).join(''));
document.querySelectorAll('[data-btn]').forEach(r=>r.innerHTML=r.dataset.btn.split(' ').map(n=>`<div class="pb sq">${ic(n)}</div>`).join(''));
const tree=[[0,'d','fol','Chapter 4',19],[1,'d','fol','Copernicus_EMS_Exercise',51],[2,'d','fol','study cases',22],[3,'d','fol','EMSR394 - Wildfire Scenario',56],[4,'r','fol','EOBrowser Scihub',37],[4,'d','fol','GHSL',11],[5,'d','zip','GHS_POP_E2015_GLOBE_R2019A_4326_9ss_V1_0_19_4.zip',111],[6,'','ras','GHS_POP_E2015_GLOBE_R2019A_4326_9ss_V1_0_19_4.tif',110],[6,'r','db','GHSL_Data_Package_2019_light.pdf',70],[6,'','ras','GHSL_Data_Package_2019_light.pdf',70],[5,'','ras','GHS_POP_E2015_GLOBE_R2019A_4326_CLIP.tif',91],[4,'r','fol','Grading Products',35],[4,'r','fol','QuickOSM_Buildings',42],[3,'r','fol','EMSR468 - Flood Scenario',52],[2,'r','q','Chapter-4_Copernicus_EMS_Exercise_Flood_and_Fire_Events',119]];
el('#browser').insertAdjacentHTML('beforeend',tree.map(([l,e,i,t,w],k)=>`<div class="trow ${k==10?'bg-body-tertiary':''}" style="padding-left:${30+l*9.35}px"><div class="ex ${e}"></div>${ic(i)}<span data-w="${w}">${t}</span></div>`).join(''));
el('#layers').innerHTML=[[0,'d',1,'grp','EMSR394 - Wildfire Scenario',56,''],[1,'',0,'brn','EMSR394_AOI01_GRA_PRODUCT_areaOfInterestA_r1_v1',118,'fst-italic text-decoration-underline text-secondary'],[1,'',1,'ras','GHS_POP_E2015_GLOBE_R2019A_4326_CLIP',93,'fw-bold'],[1,'r',0,'ras','clip_event_dNBR',36,'fst-italic text-secondary'],[0,'',1,'grp','EMSR468 - Flood Scenario',52,''],[0,'d',1,'ras','Google Satellite',34,'fw-bold']].map(([l,e,c,i,t,w,k],n)=>`<div class="trow ${n==1?'hl':''}" style="padding-left:${2+l*9.35}px"><div class="ex ${e}"></div><div class="chk ${c?'on':''}"></div>${ic(i)}<span class="${k}" data-w="${w}">${t}</span></div>`).join('');
const items=[['inf','Information',25],['src','Source',15],['sym','Symbology',25],['trn','Transparency',28],['his','Histogram',22],['ren','Rendering',22],['tmp','Temporal',19],['pyr','Pyramids',19],['met','Metadata',20],['leg','Legend',16],['srv','QGIS Server',25]];
document.querySelectorAll('.side').forEach(s=>s.insertAdjacentHTML('beforeend',items.map(([i,t,w],k)=>`<div class="it d-flex align-items-center ${k==s.dataset.act?'act':''}">${ic(i)}<span data-w="${w}">${t}</span></div>`).join('')));
el('#classes').innerHTML=[['167,4769876003...','#f7fcf5','<= 167'],['334,9539752006...','#caeac3','167 - 335'],['502,4309628009...','#7bc77c','335 - 502'],['669,9079504013...','#2a924a','502 - 670'],['inf','#00441b','> 670']].map(([v,c,l])=>`<div class="crow"><span class="v"><span ${v.length>4?'data-w="36"':''}>${v}</span></span><div class="sw" style="background:${c}"></div><span class="gray">${l}</span></div>`).join('');
el('#nums').innerHTML=[[1,278,155],[2,210,260],[3,561,160.500],[4,681,134],[5,128,374],[6,207,395],[7,207,427.500],[9,116,545],[10,360,575],[11,97,584],[12,285,673]].map(([n,x,y])=>`<circle cx="${x}" cy="${y}" r="14"/><text x="${x}" y="${y+5.5}" fill="#fff">${n}</text>`).join('');
document.querySelectorAll('[data-w]').forEach(e=>{const n=e.getBoundingClientRect().width;e.style.letterSpacing=(e.dataset.w-n)/e.textContent.length+'px'});
</script>
</body>
</html>
